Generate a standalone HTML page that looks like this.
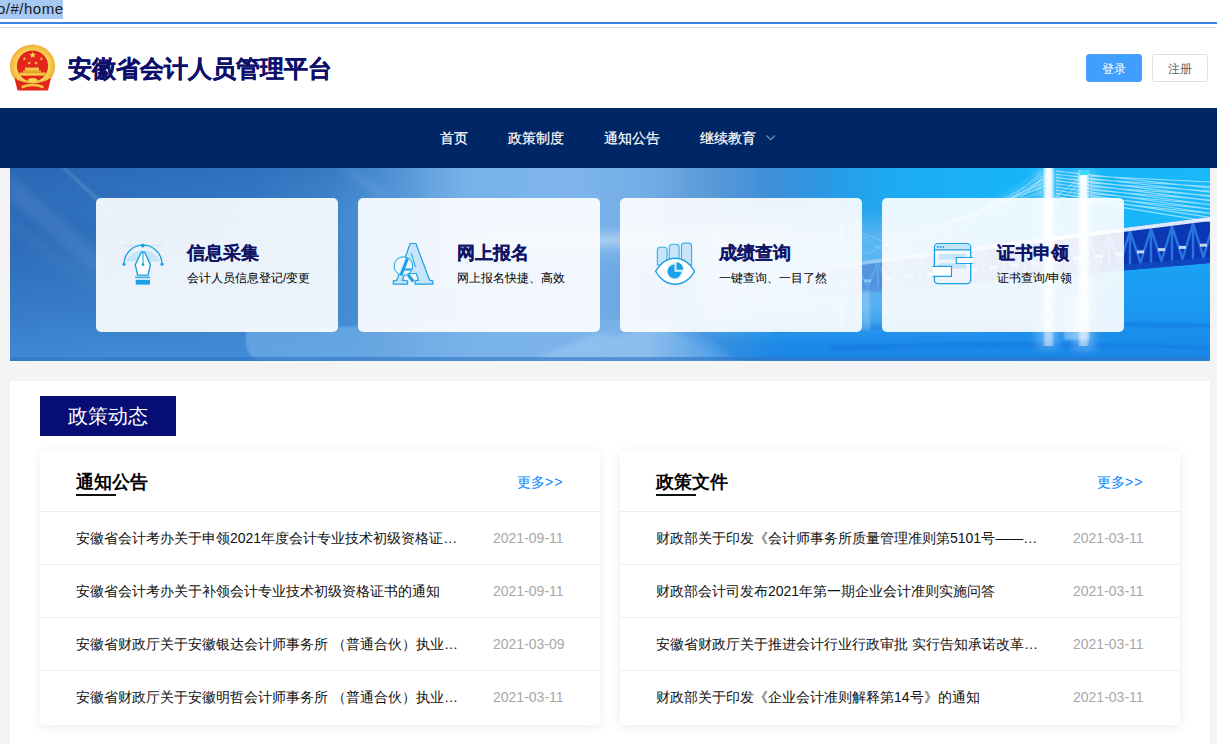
<!DOCTYPE html>
<html><head><meta charset="utf-8">
<style>
*{box-sizing:border-box;margin:0;padding:0}
html,body{width:1217px;height:744px;overflow:hidden;background:#f4f4f4;font-family:"Liberation Sans",sans-serif}
.abs{position:absolute}
#url{position:absolute;left:0;top:0;width:1217px;height:28px;background:#fff}
#url .sel{position:absolute;left:0;top:0;width:63px;height:19px;background:#a8c8f4}
#url .txt{position:absolute;left:-3px;top:-1px;font-size:15px;line-height:19px;color:#1a1a1a;letter-spacing:0.5px}
#url .bl{position:absolute;left:0;top:22px;width:1217px;height:2px;background:#3b82e6}
#url .gl{position:absolute;left:0;top:27px;width:1217px;height:1px;background:#dedede}
#hdr{position:absolute;left:0;top:28px;width:1217px;height:80px;background:#fff}
#title{position:absolute;left:68px;top:27px;font-size:24px;line-height:28px;font-weight:700;color:#0d0f6b;-webkit-text-stroke:0.3px #0d0f6b;letter-spacing:0}
.btn{position:absolute;top:26px;height:28px;width:56px;border-radius:3px;font-size:12px;line-height:28px;text-align:center}
#login{left:1086px;background:#409eff;color:#fff;border:1px solid #409eff}
#reg{left:1152px;background:#fff;color:#606266;border:1px solid #dcdfe6}
#nav{position:absolute;left:0;top:108px;width:1217px;height:60px;background:#002666}
#nav span{position:absolute;top:0;line-height:60px;font-size:14px;color:#fff;-webkit-text-stroke:0.2px #fff}
#banner{position:absolute;left:10px;top:168px;width:1200px;height:193px;overflow:hidden;background:linear-gradient(90deg,#3b7dca 0%,#4a8fd5 25%,#7db6ec 42%,#6fb0ea 55%,#3a8fdc 68%,#1c9cf2 80%,#16b0fa 100%)}
.card{position:absolute;top:30px;width:242px;height:134px;border-radius:5px;background:rgba(255,255,255,0.9)}
.card .ic{position:absolute}
.card h3{position:absolute;left:91px;top:44px;font-size:18px;line-height:22px;font-weight:bold;color:#0f1466;-webkit-text-stroke:0.15px #0f1466}
.card p{position:absolute;left:91px;top:72px;font-size:12px;line-height:16px;color:#000}
#sec{position:absolute;left:10px;top:381px;width:1200px;height:400px;background:#fff}
#tag{position:absolute;left:30px;top:15px;width:136px;height:40px;background:#060d74;color:#fff;font-size:20px;line-height:40px;text-indent:28px;font-family:"Liberation Serif",serif}
.box{position:absolute;top:70px;width:560px;height:274px;background:#fff;border-radius:4px;box-shadow:0 2px 12px 0 rgba(0,0,0,0.08)}
.box .hd{position:absolute;left:0;top:0;width:560px;height:61px;border-bottom:1px solid #ececec}
.box .hd b{position:absolute;left:36px;top:19px;font-size:18px;line-height:24px;color:#000}
.box .hd i{position:absolute;left:36px;top:43px;width:40px;height:2px;background:#111}
.box .hd a{position:absolute;left:477px;top:21px;font-size:14px;line-height:20px;color:#0f86ff;text-decoration:none}
.row{position:absolute;left:0;width:560px;height:53px;border-bottom:1px solid #ececec}
.row:last-child{border-bottom:none}
.row .t{position:absolute;left:36px;top:0px;line-height:52px;font-size:14px;color:#111;white-space:nowrap}
.row .d{position:absolute;left:453px;top:0px;line-height:52px;font-size:14px;color:#a8a8a8}
</style></head><body>
<div id="url"><div class="sel"></div><div class="txt">o/#/home</div><div class="bl"></div><div class="gl"></div></div>
<div id="hdr">
  <svg class="abs" style="left:0;top:8px" width="70" height="64" viewBox="0 36 70 64">
    <defs>
      <radialGradient id="ring" cx="0.5" cy="0.5" r="0.5">
        <stop offset="0.68" stop-color="#f8dc60"/>
        <stop offset="0.85" stop-color="#f4c446"/>
        <stop offset="1" stop-color="#eeae3a"/>
      </radialGradient>
    </defs>
    
    <ellipse cx="32.5" cy="66.2" rx="22.6" ry="21.6" fill="url(#ring)"/>
    <circle cx="32.5" cy="66" r="15.6" fill="#e3261c"/>
    
    <rect x="25" y="67.5" width="14" height="3.5" fill="#f4c640"/>
    <rect x="23" y="70.5" width="18" height="2" fill="#e8a830"/>
    <rect x="19.3" y="72.5" width="26.3" height="3.2" fill="#f4c640"/>
    <polygon points="32.70,51.60 33.55,54.04 36.12,54.09 34.07,55.64 34.82,58.11 32.70,56.64 30.58,58.11 31.33,55.64 29.28,54.09 31.85,54.04" fill="#f8d848"/><polygon points="25.15,57.01 25.13,58.38 26.40,58.87 25.10,59.27 25.02,60.63 24.24,59.51 22.92,59.86 23.74,58.77 23.00,57.63 24.29,58.07" fill="#f8d848"/><polygon points="40.65,57.01 41.51,58.07 42.80,57.63 42.06,58.77 42.88,59.86 41.56,59.51 40.78,60.63 40.70,59.27 39.40,58.87 40.67,58.38" fill="#f8d848"/><polygon points="30.42,61.54 29.94,62.82 30.96,63.71 29.60,63.64 29.07,64.90 28.71,63.58 27.36,63.46 28.50,62.72 28.19,61.39 29.25,62.24" fill="#f8d848"/><polygon points="34.88,61.54 36.05,62.24 37.11,61.39 36.80,62.72 37.94,63.46 36.59,63.58 36.23,64.90 35.70,63.64 34.34,63.71 35.36,62.82" fill="#f8d848"/>
    <path d="M14.5 78 L17.5 90.5 L48 90.5 L51 78 Q32.5 88 14.5 78Z" fill="#e3261c"/>
    <path d="M17 79 Q32.5 86 48 79" stroke="#f2c23a" stroke-width="1.5" fill="none"/>
    <ellipse cx="32.7" cy="80.5" rx="5" ry="2.6" fill="#f6d04a"/>
    <path d="M21 86 Q32.5 81 44 86 L43 88.5 Q32.5 84 22 88.5Z" fill="#f4c640"/>
  </svg>
  <div id="title">安徽省会计人员管理平台</div>
  <div class="btn" id="login">登录</div>
  <div class="btn" id="reg">注册</div>
</div>
<div id="nav">
  <span style="left:440px">首页</span>
  <span style="left:508px">政策制度</span>
  <span style="left:604px">通知公告</span>
  <span style="left:700px">继续教育</span>
  <svg class="abs" style="left:765px;top:134px;position:fixed" width="11" height="8" viewBox="0 0 11 8"><path d="M1.5 1.5 L5.7 5.7 L9.9 1.5" stroke="#8091b8" stroke-width="1.1" fill="none"/></svg>
</div>
<div id="banner">
  <svg class="abs" style="left:0;top:0" width="1200" height="193" viewBox="0 0 1200 193" preserveAspectRatio="none">
    <defs>
      <linearGradient id="bg" x1="0" y1="0" x2="1200" y2="0" gradientUnits="userSpaceOnUse">
        <stop offset="0.0000" stop-color="#2d6bb8"/>
        <stop offset="0.2000" stop-color="#3378c4"/>
        <stop offset="0.2667" stop-color="#3f86cc"/>
        <stop offset="0.3333" stop-color="#5d9cdc"/>
        <stop offset="0.3833" stop-color="#78b2ea"/>
        <stop offset="0.4667" stop-color="#7eb6ec"/>
        <stop offset="0.5333" stop-color="#72ace6"/>
        <stop offset="0.5833" stop-color="#5a9ad8"/>
        <stop offset="0.6333" stop-color="#3f8ed8"/>
        <stop offset="0.6833" stop-color="#2a9ae6"/>
        <stop offset="0.7333" stop-color="#1eaaf2"/>
        <stop offset="0.8333" stop-color="#18b4f8"/>
        <stop offset="1.0000" stop-color="#18b8fa"/>
      </linearGradient>
      <linearGradient id="leftv" x1="0" y1="0" x2="0" y2="1">
        <stop offset="0" stop-color="#235fae" stop-opacity="0.3"/>
        <stop offset="0.3" stop-color="#3a80cc" stop-opacity="0"/>
        <stop offset="1" stop-color="#4a96e0" stop-opacity="0.72"/>
      </linearGradient>
      <linearGradient id="leftmask" x1="0" y1="0" x2="1" y2="0">
        <stop offset="0" stop-color="#fff"/>
        <stop offset="0.75" stop-color="#fff"/>
        <stop offset="1" stop-color="#000"/>
      </linearGradient>
      <mask id="lm"><rect x="0" y="0" width="420" height="192" fill="url(#leftmask)"/></mask>
      <linearGradient id="water" x1="0" y1="0" x2="0" y2="1">
        <stop offset="0" stop-color="#1aa8f6"/>
        <stop offset="0.6" stop-color="#1a98f0"/>
        <stop offset="1" stop-color="#1a84e6"/>
      </linearGradient>
      <linearGradient id="wmaskg" x1="0" y1="0" x2="1" y2="0">
        <stop offset="0" stop-color="#000"/>
        <stop offset="0.25" stop-color="#fff"/>
        <stop offset="1" stop-color="#fff"/>
      </linearGradient>
      <mask id="wm"><rect x="640" y="0" width="560" height="192" fill="url(#wmaskg)"/></mask>
      <linearGradient id="truss" x1="0" y1="0" x2="0" y2="1">
        <stop offset="0" stop-color="#0830b8"/>
        <stop offset="1" stop-color="#1850d0"/>
      </linearGradient>
      <linearGradient id="dmaskg" x1="0" y1="0" x2="1" y2="0">
        <stop offset="0" stop-color="#000"/>
        <stop offset="0.3" stop-color="#888"/>
        <stop offset="0.6" stop-color="#fff"/>
        <stop offset="1" stop-color="#fff"/>
      </linearGradient>
      <mask id="dm"><rect x="700" y="0" width="500" height="192" fill="url(#dmaskg)"/></mask>
      <linearGradient id="tw" x1="0" y1="0" x2="1" y2="0">
        <stop offset="0" stop-color="#fff" stop-opacity="0.3"/>
        <stop offset="0.3" stop-color="#fff" stop-opacity="0.95"/>
        <stop offset="0.7" stop-color="#fff" stop-opacity="0.95"/>
        <stop offset="1" stop-color="#fff" stop-opacity="0.3"/>
      </linearGradient>
      <linearGradient id="haze" x1="0" y1="0" x2="1" y2="0">
        <stop offset="0" stop-color="#9cc8f2" stop-opacity="0.7"/>
        <stop offset="0.45" stop-color="#9cc8f2" stop-opacity="0.45"/>
        <stop offset="1" stop-color="#9cc8f2" stop-opacity="0"/>
      </linearGradient>
      <linearGradient id="twmg" x1="0" y1="0" x2="0" y2="1"><stop offset="0" stop-color="#fff"/><stop offset="0.5" stop-color="#eee"/><stop offset="1" stop-color="#777"/></linearGradient>
      <mask id="twm" maskUnits="userSpaceOnUse" x="0" y="0" width="1200" height="193"><rect x="1000" y="0" width="100" height="180" fill="url(#twmg)"/></mask>
      <filter id="bl8" x="-30%" y="-50%" width="160%" height="200%"><feGaussianBlur stdDeviation="10"/></filter>
      <filter id="bl4" x="-50%" y="-50%" width="200%" height="200%"><feGaussianBlur stdDeviation="4"/></filter>
      <filter id="bl2" x="-50%" y="-50%" width="200%" height="200%"><feGaussianBlur stdDeviation="2"/></filter>
      <filter id="bl1" x="-50%" y="-50%" width="200%" height="200%"><feGaussianBlur stdDeviation="0.8"/></filter>
    </defs>
    <rect width="1200" height="192" fill="url(#bg)"/>
    <rect width="420" height="192" fill="url(#leftv)" mask="url(#lm)"/>
    <!-- diagonal streaks left -->
    <path d="M52 0 L56 0 L110 50 L106 52Z" fill="#fff" opacity="0.14" filter="url(#bl1)"/>
    <path d="M0 6 L0 30 L90 112 L90 86Z" fill="#fff" opacity="0.07" filter="url(#bl4)"/>
    <path d="M0 50 L0 62 L90 130 L90 118Z" fill="#fff" opacity="0.04" filter="url(#bl4)"/>
    <path d="M330 0 L345 0 L380 28 L365 28Z" fill="#fff" opacity="0.05" filter="url(#bl2)"/>
    <!-- mist band middle -->
    <ellipse cx="640" cy="72" rx="190" ry="7" fill="#fff" opacity="0.35" filter="url(#bl4)"/>
    <path d="M420 192 L430 120 Q560 80 700 100 L760 192Z" fill="#5598d8" opacity="0.25" filter="url(#bl4)"/>
    <!-- light shape bottom middle -->
    <path d="M236 162 Q300 160 420 156 Q560 150 640 152 Q690 160 730 193 L250 193 Q238 190 236 175Z" fill="#84baee" opacity="0.5" filter="url(#bl1)"/>
    <path d="M520 193 L575 170 Q590 162 605 168 L640 160 Q650 156 662 162 L720 193Z" fill="#b4d6f6" opacity="0.35" filter="url(#bl2)"/>
    <!-- water right -->
    <rect x="640" y="70" width="560" height="122" fill="url(#water)" mask="url(#wm)"/>
    <path d="M760 162 Q950 150 1200 156 L1200 160 Q950 154 760 166Z" fill="#0a60d8" opacity="0.35" filter="url(#bl1)"/>
    <path d="M820 178 Q1000 172 1200 178 L1200 181 Q1000 176 820 182Z" fill="#0a60d8" opacity="0.3" filter="url(#bl1)"/>
    <!-- far tower -->
    <rect x="829" y="52" width="5" height="110" fill="#fff" opacity="0.3" filter="url(#bl1)"/>
    <g mask="url(#dm)">
      <!-- cables left -->
      <g stroke="#fff" stroke-width="0.7" opacity="0.6">
        <path d="M1039 4 L960 76 M1039 8 L920 80 M1039 12 L880 85 M1039 16 L850 88 M1075 6 L990 72 M1075 10 L1010 70"/>
        <path d="M834 55 L880 88 M834 58 L900 84 M834 62 L770 98 M834 66 L800 94"/>
      </g>
      <!-- deck & truss -->
      <path d="M700 112 L1200 49 L1200 95 L700 138Z" fill="#0b36b4"/>
      <g stroke="#2f86e8" stroke-width="2.4" fill="none" opacity="0.8"><path d="M700.0 116.0 L710.5 131.1 L721.0 113.4 M700.0 116.0 L700.0 135.0 M721.0 113.4 L731.5 129.3 L742.0 110.7 M721.0 113.4 L721.0 133.2 M742.0 110.7 L752.5 127.5 L763.0 108.1 M742.0 110.7 L742.0 131.4 M763.0 108.1 L773.5 125.7 L784.0 105.4 M763.0 108.1 L763.0 129.6 M784.0 105.4 L794.5 123.9 L805.0 102.8 M784.0 105.4 L784.0 127.8 M805.0 102.8 L815.5 122.1 L826.0 100.1 M805.0 102.8 L805.0 126.0 M826.0 100.1 L836.5 120.3 L847.0 97.5 M826.0 100.1 L826.0 124.2 M847.0 97.5 L857.5 118.5 L868.0 94.8 M847.0 97.5 L847.0 122.4 M868.0 94.8 L878.5 116.6 L889.0 92.2 M868.0 94.8 L868.0 120.6 M889.0 92.2 L899.5 114.8 L910.0 89.5 M889.0 92.2 L889.0 118.7 M910.0 89.5 L920.5 113.0 L931.0 86.9 M910.0 89.5 L910.0 116.9 M931.0 86.9 L941.5 111.2 L952.0 84.2 M931.0 86.9 L931.0 115.1 M952.0 84.2 L962.5 109.4 L973.0 81.6 M952.0 84.2 L952.0 113.3 M973.0 81.6 L983.5 107.6 L994.0 79.0 M973.0 81.6 L973.0 111.5 M994.0 79.0 L1004.5 105.8 L1015.0 76.3 M994.0 79.0 L994.0 109.7 M1015.0 76.3 L1025.5 104.0 L1036.0 73.7 M1015.0 76.3 L1015.0 107.9 M1036.0 73.7 L1046.5 102.2 L1057.0 71.0 M1036.0 73.7 L1036.0 106.1 M1057.0 71.0 L1067.5 100.4 L1078.0 68.4 M1057.0 71.0 L1057.0 104.3 M1078.0 68.4 L1088.5 98.6 L1099.0 65.7 M1078.0 68.4 L1078.0 102.5 M1099.0 65.7 L1109.5 96.8 L1120.0 63.1 M1099.0 65.7 L1099.0 100.7 M1120.0 63.1 L1130.5 95.0 L1141.0 60.4 M1120.0 63.1 L1120.0 98.9 M1141.0 60.4 L1151.5 93.2 L1162.0 57.8 M1141.0 60.4 L1141.0 97.1 M1162.0 57.8 L1172.5 91.4 L1183.0 55.1 M1162.0 57.8 L1162.0 95.3 M1183.0 55.1 L1193.5 89.6 L1204.0 52.5 M1183.0 55.1 L1183.0 93.5"/></g>
      <g fill="#e0f0ff" opacity="0.85"><rect x="707.0" y="126.9" width="7" height="3"/><rect x="728.0" y="124.7" width="7" height="3"/><rect x="749.0" y="122.4" width="7" height="3"/><rect x="770.0" y="120.2" width="7" height="3"/><rect x="791.0" y="118.0" width="7" height="3"/><rect x="812.0" y="115.8" width="7" height="3"/><rect x="833.0" y="113.5" width="7" height="3"/><rect x="854.0" y="111.3" width="7" height="3"/><rect x="875.0" y="109.1" width="7" height="3"/><rect x="896.0" y="106.9" width="7" height="3"/><rect x="917.0" y="104.6" width="7" height="3"/><rect x="938.0" y="102.4" width="7" height="3"/><rect x="959.0" y="100.2" width="7" height="3"/><rect x="980.0" y="97.9" width="7" height="3"/><rect x="1001.0" y="95.7" width="7" height="3"/><rect x="1022.0" y="93.5" width="7" height="3"/><rect x="1043.0" y="91.3" width="7" height="3"/><rect x="1064.0" y="89.0" width="7" height="3"/><rect x="1085.0" y="86.8" width="7" height="3"/><rect x="1106.0" y="84.6" width="7" height="3"/><rect x="1127.0" y="82.4" width="7" height="3"/><rect x="1148.0" y="80.1" width="7" height="3"/><rect x="1169.0" y="77.9" width="7" height="3"/><rect x="1190.0" y="75.7" width="7" height="3"/></g>
      <path d="M700 112 L1200 49 L1200 53 L700 116Z" fill="#e8f4ff" opacity="0.95"/>
      <path d="M700 133 L1200 89 L1200 95 L700 138Z" fill="#1048c0" opacity="0.9"/>
    </g>
    <rect x="690" y="55" width="420" height="100" fill="url(#haze)" filter="url(#bl8)"/>
    <!-- cables right -->
    <g stroke="#fff" stroke-width="1.1" opacity="0.55"><path d="M1046 3.0 L1200 20.0 M1046 6.2 L1200 24.2 M1046 9.4 L1200 28.4 M1046 12.6 L1200 32.6 M1046 15.8 L1200 36.8 M1046 19.0 L1200 41.0 M1046 22.2 L1200 45.2 M1046 25.4 L1200 49.4 M1046 28.6 L1200 53.6 M1080 8.0 L1200 14.0 M1080 11.5 L1200 18.5 M1080 15.0 L1200 23.0 M1080 18.5 L1200 27.5 M1080 22.0 L1200 32.0 M1080 25.5 L1200 36.5 M1080 29.0 L1200 41.0 M1080 32.5 L1200 45.5"/></g>
    <g stroke="#fff" stroke-width="0.9" opacity="0.35"><path d="M1032 4.0 L990.0 40.0 M1032 8.0 L965.0 48.0 M1032 12.0 L940.0 56.0 M1032 16.0 L915.0 64.0 M1032 20.0 L890.0 72.0 M1032 24.0 L865.0 80.0"/></g>
    <path d="M1032 0 L940 60 L1032 40Z" fill="#fff" opacity="0.08"/>
    <!-- pier -->
    <rect x="852" y="122" width="8" height="40" fill="#fff" opacity="0.2" filter="url(#bl1)"/>
    <rect x="1054" y="130" width="26" height="42" fill="#fff" opacity="0.35" filter="url(#bl1)"/>
    <!-- towers -->
    <rect x="1027" y="0" width="22" height="180" fill="#fff" opacity="0.25" filter="url(#bl4)"/>
    <rect x="1063" y="2" width="22" height="180" fill="#fff" opacity="0.25" filter="url(#bl4)"/>
    <rect x="1033" y="0" width="11" height="178" fill="url(#tw)" mask="url(#twm)"/>
    <rect x="1068" y="2" width="11" height="176" fill="url(#tw)" mask="url(#twm)"/>
    <rect x="1069" y="2" width="10" height="5" rx="2" fill="#30dcf8"/>
    <!-- bottom strip -->
    <rect x="0" y="189" width="1200" height="4" fill="#2f74c4" opacity="0.6"/>
  </svg>
<div class="card" style="left:86px"><svg class="ic" style="left:19px;top:38px;width:56px;height:56px" viewBox="0 0 56 56">
<path d="M10.6 25.6 A19 19 0 0 1 45.4 25.6Z" fill="#c6e5f8"/>
<path d="M8.3 9.4 L47.4 9.4" stroke="#c6e5f8" stroke-width="1"/>
<path d="M9 28.2 A19 19 0 0 1 47 28.2" stroke="#1ba1e6" stroke-width="1.3" fill="none"/>
<circle cx="9" cy="28.2" r="1.6" fill="#1ba1e6"/><circle cx="47" cy="28.2" r="1.6" fill="#1ba1e6"/><circle cx="27.8" cy="9.6" r="1.9" fill="#1ba1e6"/>
<path d="M26.3 16.2 L29.7 16.2 L35.4 28.6 L33.1 39.1 L22.6 39.1 L20.3 28.6Z" fill="#fff" stroke="#1ba1e6" stroke-width="1.4" stroke-linejoin="round"/>
<path d="M28 16.5 L28 28.6" stroke="#1ba1e6" stroke-width="1.1"/><circle cx="28" cy="28.6" r="1.4" fill="#1ba1e6"/>
<rect x="20" y="40.6" width="15" height="1.3" fill="#1ba1e6"/><rect x="20.7" y="41.9" width="14.3" height="2.1" fill="#c6e5f8"/><rect x="20.7" y="44" width="14.3" height="4.6" fill="#1ba1e6"/>
</svg><h3>信息采集</h3><p>会计人员信息登记/变更</p></div>
  <div class="card" style="left:348px"><svg class="ic" style="left:27px;top:38px;width:56px;height:56px" viewBox="0 0 56 56">
<path d="M25.2 7.5 L30.9 7.5 L44.6 44.2 L47.8 45 L47.8 48.2 L30.1 48.2 L30.1 45 L33.6 44.2 L31.2 37.5 L19.8 37.5 L17.4 44.2 L22.6 45 L22.6 48.2 L8.3 48.2 L8.3 45 L11.8 44.2 Z" fill="#c6e5f8" stroke="#1ba1e6" stroke-width="1.2" stroke-linejoin="miter"/>
<path d="M26.3 17.3 L30.4 31" stroke="#1ba1e6" stroke-width="1"/>
<circle cx="18.4" cy="30.1" r="9.3" fill="#eef6fc" fill-opacity="0.95" stroke="#1ba1e6" stroke-width="1"/>
<path d="M23.8 39.6 L27.6 44.6" stroke="#1ba1e6" stroke-width="3.2" stroke-linecap="round"/>
<path d="M22.5 22.3 L16 39" stroke="#1ba1e6" stroke-width="3"/>
<path d="M18.8 33.5 L26.6 33.5" stroke="#1ba1e6" stroke-width="2"/>
</svg><h3 style="left:99px">网上报名</h3><p style="left:99px">网上报名快捷、高效</p></div>
  <div class="card" style="left:610px"><svg class="ic" style="left:26px;top:38px;width:56px;height:56px" viewBox="0 0 56 56">
<path d="M11.3 29 L11.3 14.3 Q11.3 11.3 14.3 11.3 L18.1 11.3 Q21.1 11.3 21.1 14.3 L21.1 29Z" fill="#c6e5f8" stroke="#3aaeea" stroke-width="1.1"/>
<path d="M23.3 27 L23.3 11.3 Q23.3 8.3 26.3 8.3 L30.1 8.3 Q33.1 8.3 33.1 11.3 L33.1 27Z" fill="#c6e5f8" stroke="#3aaeea" stroke-width="1.1"/>
<path d="M35.4 29 L35.4 10.1 Q35.4 7.1 38.4 7.1 L42.6 7.1 Q45.6 7.1 45.6 10.1 L45.6 29Z" fill="#c6e5f8" stroke="#3aaeea" stroke-width="1.1"/>
<path d="M9.6 35.2 C13.5 27.5 21 22.2 29.1 22.2 C37.2 22.2 44.7 27.5 48.6 35.2 C44.7 42.9 37.2 48.2 29.1 48.2 C21 48.2 13.5 42.9 9.6 35.2Z" fill="#fff" stroke="#1ba1e6" stroke-width="1.4" stroke-linejoin="round"/>
<circle cx="28.8" cy="35.2" r="8.4" fill="#c6e5f8" opacity="0.6"/>
<path d="M28.5 35.8 L28.5 28.6 A6.9 6.9 0 1 0 35.4 35.8Z" fill="#1ba1e6"/>
<path d="M30.5 33.8 L30.5 26.1 A7.3 7.3 0 0 1 37.2 33.8Z" fill="#1ba1e6"/>
</svg><h3 style="left:99px">成绩查询</h3><p style="left:99px">一键查询、一目了然</p></div>
  <div class="card" style="left:872px"><svg class="ic" style="left:43px;top:38px;width:56px;height:56px" viewBox="0 0 56 56">
<rect x="9.4" y="7.6" width="36.3" height="40" rx="3.6" fill="#f4fafe" fill-opacity="0.4" stroke="#1ba1e6" stroke-width="1.3"/>
<path d="M10.1 13.6 L10.1 11.2 Q10.1 8.3 13 8.3 L42.1 8.3 Q45 8.3 45 11.2 L45 13.6Z" fill="#c6e5f8"/>
<path d="M9.4 13.8 L45.7 13.8" stroke="#1ba1e6" stroke-width="1.2"/>
<circle cx="12.8" cy="11" r="0.9" fill="#1ba1e6"/><circle cx="15.6" cy="11" r="0.9" fill="#1ba1e6"/><circle cx="18.4" cy="11" r="0.9" fill="#1ba1e6"/>
<rect x="14" y="18" width="27" height="5.6" fill="#c6e5f8"/><rect x="14" y="27.2" width="27" height="5.4" fill="#c6e5f8"/>
<rect x="31.3" y="21.5" width="16.7" height="6" fill="#fff"/><path d="M48 21.5 L31.3 21.5 L31.3 27.5 L48 27.5" fill="none" stroke="#1ba1e6" stroke-width="1.2"/>
<rect x="7.6" y="30.4" width="18.9" height="10" fill="#fff"/><path d="M7.6 30.4 L26.5 30.4 L26.5 40.4 L7.6 40.4" fill="none" stroke="#1ba1e6" stroke-width="1.2"/>
</svg><h3 style="left:115px">证书申领</h3><p style="left:115px">证书查询/申领</p></div>
</div>
<div id="sec">
  <div id="tag">政策动态</div>
  <div class="box" style="left:30px">
    <div class="hd"><b>通知公告</b><i></i><a>更多<span style="letter-spacing:1px">&gt;&gt;</span></a></div>
    <div class="row" style="top:61px"><div class="t">安徽省会计考办关于申领2021年度会计专业技术初级资格证…</div><div class="d">2021-09-11</div></div>
    <div class="row" style="top:114px"><div class="t">安徽省会计考办关于补领会计专业技术初级资格证书的通知</div><div class="d">2021-09-11</div></div>
    <div class="row" style="top:167px"><div class="t">安徽省财政厅关于安徽银达会计师事务所 （普通合伙）执业…</div><div class="d">2021-03-09</div></div>
    <div class="row" style="top:220px;border-bottom:none"><div class="t">安徽省财政厅关于安徽明哲会计师事务所 （普通合伙）执业…</div><div class="d">2021-03-11</div></div>
  </div>
  <div class="box" style="left:610px">
    <div class="hd"><b>政策文件</b><i></i><a>更多<span style="letter-spacing:1px">&gt;&gt;</span></a></div>
    <div class="row" style="top:61px"><div class="t">财政部关于印发《会计师事务所质量管理准则第5101号——…</div><div class="d">2021-03-11</div></div>
    <div class="row" style="top:114px"><div class="t">财政部会计司发布2021年第一期企业会计准则实施问答</div><div class="d">2021-03-11</div></div>
    <div class="row" style="top:167px"><div class="t">安徽省财政厅关于推进会计行业行政审批 实行告知承诺改革…</div><div class="d">2021-03-11</div></div>
    <div class="row" style="top:220px;border-bottom:none"><div class="t">财政部关于印发《企业会计准则解释第14号》的通知</div><div class="d">2021-03-11</div></div>
  </div>
</div>
</body></html>
